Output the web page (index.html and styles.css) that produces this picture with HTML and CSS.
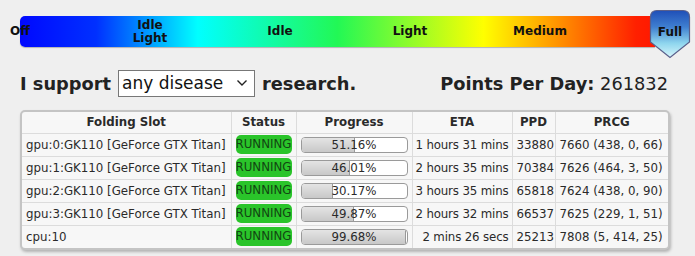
FILE: index.html
```html
<!DOCTYPE html>
<html>
<head>
<meta charset="utf-8">
<link rel="stylesheet" href="styles.css">
</head>
<body>
<div class="power">
  <div class="power-bar"></div>
  <div class="power-labels">
    <div class="lbl"><span>Off</span></div>
    <div class="lbl"><span>Idle<br>Light</span></div>
    <div class="lbl"><span>Idle</span></div>
    <div class="lbl"><span>Light</span></div>
    <div class="lbl"><span>Medium</span></div>
  </div>
  <div class="marker">
    <svg width="42" height="50" viewBox="0 0 42 50">
      <defs>
        <linearGradient id="mg" x1="0" y1="0" x2="0" y2="1">
          <stop offset="0" stop-color="#1f4fb8"/>
          <stop offset="0.35" stop-color="#3f7fd0"/>
          <stop offset="0.7" stop-color="#8fd6ee"/>
          <stop offset="1" stop-color="#d8f6fb"/>
        </linearGradient>
      </defs>
      <path d="M8 1.5 H34 Q40.5 1.5 40.5 8 V33 L21 48.5 L1.5 33 V8 Q1.5 1.5 8 1.5 Z" fill="url(#mg)" stroke="#5a5f8a" stroke-width="1.2"/>
    </svg>
    <span class="marker-text">Full</span>
  </div>
</div>

<div class="heading">
  <div class="support">
    <span>I support</span>
    <span class="select">any disease<svg class="chev" width="12" height="8" viewBox="0 0 12 8"><path d="M1.5 1.5 L6 6 L10.5 1.5" fill="none" stroke="#222" stroke-width="1.4"/></svg></span>
    <span>research.</span>
  </div>
  <div class="ppd"><b>Points Per Day:</b> 261832</div>
</div>

<div class="table-wrap">
<table class="slots">
  <thead>
    <tr><th class="c-slot">Folding Slot</th><th class="c-status">Status</th><th class="c-prog">Progress</th><th class="c-eta">ETA</th><th class="c-ppd">PPD</th><th class="c-prcg">PRCG</th></tr>
  </thead>
  <tbody>
    <tr><td>gpu:0:GK110 [GeForce GTX Titan]</td><td><span class="running">RUNNING</span></td><td><div class="prog"><div class="fill" style="width:51.16%"></div><span>51.16%</span></div></td><td class="r">1 hours 31 mins</td><td>33880</td><td>7660 (438, 0, 66)</td></tr>
    <tr><td>gpu:1:GK110 [GeForce GTX Titan]</td><td><span class="running">RUNNING</span></td><td><div class="prog"><div class="fill" style="width:46.01%"></div><span>46.01%</span></div></td><td class="r">2 hours 35 mins</td><td>70384</td><td>7626 (464, 3, 50)</td></tr>
    <tr><td>gpu:2:GK110 [GeForce GTX Titan]</td><td><span class="running">RUNNING</span></td><td><div class="prog"><div class="fill" style="width:30.17%"></div><span>30.17%</span></div></td><td class="r">3 hours 35 mins</td><td>65818</td><td>7624 (438, 0, 90)</td></tr>
    <tr><td>gpu:3:GK110 [GeForce GTX Titan]</td><td><span class="running">RUNNING</span></td><td><div class="prog"><div class="fill" style="width:49.87%"></div><span>49.87%</span></div></td><td class="r">2 hours 32 mins</td><td>66537</td><td>7625 (229, 1, 51)</td></tr>
    <tr><td>cpu:10</td><td><span class="running">RUNNING</span></td><td><div class="prog"><div class="fill" style="width:99.68%"></div><span>99.68%</span></div></td><td class="r">2 mins 26 secs</td><td>25213</td><td>7808 (5, 414, 25)</td></tr>
  </tbody>
</table>
</div>
</body>
</html>
```
FILE: styles.css
```css
html, body {
  margin: 0;
  padding: 0;
}
body {
  background: #efefef;
  font-family: "DejaVu Sans", Verdana, sans-serif;
  color: #222;
  width: 695px;
  height: 256px;
  overflow: hidden;
}
.power {
  position: relative;
  margin: 16px 0 0 20px;
  width: 635px;
  height: 31px;
}
.power-bar {
  height: 31px;
  border-radius: 5px 0 0 5px;
  background: linear-gradient(to right, #0008ff 0%, #0030ff 12%, #00ffff 28%, #22f855 50%, #ffff00 73%, #ff9000 85%, #ff2000 97%, #ff1800 100%);
  box-shadow: 0 1px 1px rgba(0,0,0,0.25);
}
.power-labels {
  position: absolute;
  top: 0;
  bottom: 0;
  left: -20px;
  display: grid;
  grid-template-columns: repeat(5, 40px);
  column-gap: 90px;
  align-items: center;
  font-weight: bold;
  font-size: 12px;
  line-height: 13px;
  color: #111;
}
.lbl {
  display: flex;
  justify-content: center;
  text-align: center;
  white-space: nowrap;
}
.marker {
  position: absolute;
  left: 629px;
  top: -7px;
  width: 42px;
  height: 50px;
}
.marker svg {
  display: block;
}
.marker-text {
  position: absolute;
  left: 0;
  right: 0;
  top: 16px;
  text-align: center;
  font-weight: bold;
  font-size: 12px;
  color: #111;
}
.heading {
  display: flex;
  justify-content: space-between;
  align-items: center;
  margin: 22px 27px 0 20px;
  font-size: 17.8px;
  height: 28px;
}
.support {
  display: flex;
  align-items: center;
  gap: 7px;
  font-weight: bold;
}
.select {
  display: inline-flex;
  align-items: center;
  justify-content: space-between;
  box-sizing: border-box;
  width: 137px;
  height: 27px;
  padding: 0 6px 0 3px;
  background: #fff;
  border: 1px solid #777;
  font-weight: normal;
  font-size: 17px;
  color: #111;
}
.chev {
  display: block;
}
.ppd b {
  font-weight: bold;
}
.table-wrap {
  margin: 13px 0 0 20px;
  width: 650px;
  box-sizing: border-box;
  border: 2px solid #c4c4c4;
  border-radius: 5px;
  background: #f7f7f7;
  box-shadow: 1px 2px 3px rgba(0,0,0,0.25);
  overflow: hidden;
}
.slots {
  border-collapse: collapse;
  table-layout: fixed;
  width: 100%;
  font-size: 11.8px;
  color: #2a2a2a;
}
.slots th, .slots td {
  box-sizing: border-box;
  border-left: 1px solid #dcdcdc;
  border-top: 1px solid #dcdcdc;
  padding: 0 4px;
  white-space: nowrap;
  overflow: hidden;
}
.slots th:first-child, .slots td:first-child {
  border-left: none;
}
.slots thead th {
  border-top: none;
  height: 21px;
  font-weight: bold;
  text-align: center;
}
.slots td {
  height: 23px;
}
.c-slot { width: 209px; }
.c-status { width: 65px; }
.c-prog { width: 116px; }
.c-eta { width: 100px; }
.c-ppd { width: 43px; }
.slots td.r {
  text-align: right;
  padding: 0 3px 0 2px;
  letter-spacing: -0.15px;
}
.running {
  display: block;
  background: #2ac42a;
  color: #124512;
  border-radius: 5px;
  padding: 2px 0;
  text-align: center;
  line-height: 15px;
}
.prog {
  position: relative;
  height: 16px;
  box-sizing: border-box;
  border: 1px solid #9a9a9a;
  border-radius: 4px;
  background: #fff;
  overflow: hidden;
}
.fill {
  height: 100%;
  background: linear-gradient(#e4e4e4, #c8c8c8);
  border-right: 1px solid #999;
  box-sizing: border-box;
}
.prog span {
  position: absolute;
  left: 0;
  right: 0;
  top: 0;
  text-align: center;
  line-height: 14px;
}
```
